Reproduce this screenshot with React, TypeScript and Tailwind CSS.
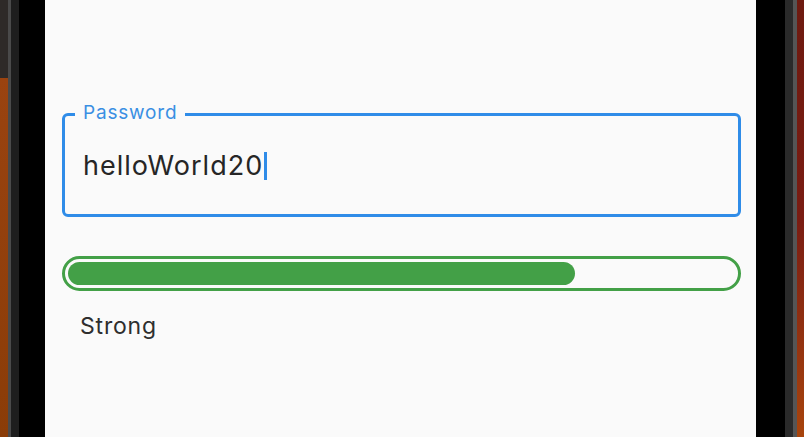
export default function App() {
  return (
    <div className="flex h-[437px] w-[804px] overflow-hidden bg-black">
      <div className="flex w-[45px] shrink-0">
        <div className="flex w-[8px] flex-col">
          <div className="h-[78px] bg-[#2e2a28]" />
          <div className="flex-1 bg-gradient-to-b from-[#9a4310] to-[#8a3c08]" />
        </div>
        <div className="w-[3px] bg-[#4a4a4a]" />
        <div className="w-[8px] bg-[#1e1e1e]" />
        <div className="flex-1 bg-black" />
      </div>

      <div className="flex w-[711px] shrink-0 flex-col bg-[#fafafa] pl-[17px] pr-[15px] pt-[113px] font-['Inter',sans-serif]">
        <div className="relative h-[104px] rounded-[6px] border-[3px] border-[#2f8ce8]">
          <span className="absolute -top-[15px] left-[10px] bg-[#fafafa] px-[8px] text-[19px] leading-[24px] tracking-[0.8px] text-[#3a8fe3]">
            Password
          </span>
          <div className="flex h-full items-center pl-[18px] pt-[2px]">
            <span className="text-[27px] leading-[32px] tracking-[1px] text-[#262626]">helloWorld20</span>
            <span className="ml-[1px] h-[28px] w-[3px] bg-[#2f8ce8]" />
          </div>
        </div>

        <div className="mt-[39px] h-[35px] rounded-full border-[3px] border-[#43a047] p-[3px]">
          <div className="h-full w-[76%] rounded-full bg-[#43a047]" />
        </div>

        <div className="mt-[21px] pl-[18px] text-[23px] leading-[28px] tracking-[0.8px] text-[#2e2e2e]">Strong</div>
      </div>

      <div className="flex flex-1">
        <div className="w-[29px] bg-black" />
        <div className="w-[8px] bg-[#2a2a2a]" />
        <div className="relative w-[4px] bg-[#555]" />
        <div className="flex-1 bg-gradient-to-b from-[#6e1a10] via-[#7a1c12] to-[#a8440c]" />
      </div>
    </div>
  );
}
